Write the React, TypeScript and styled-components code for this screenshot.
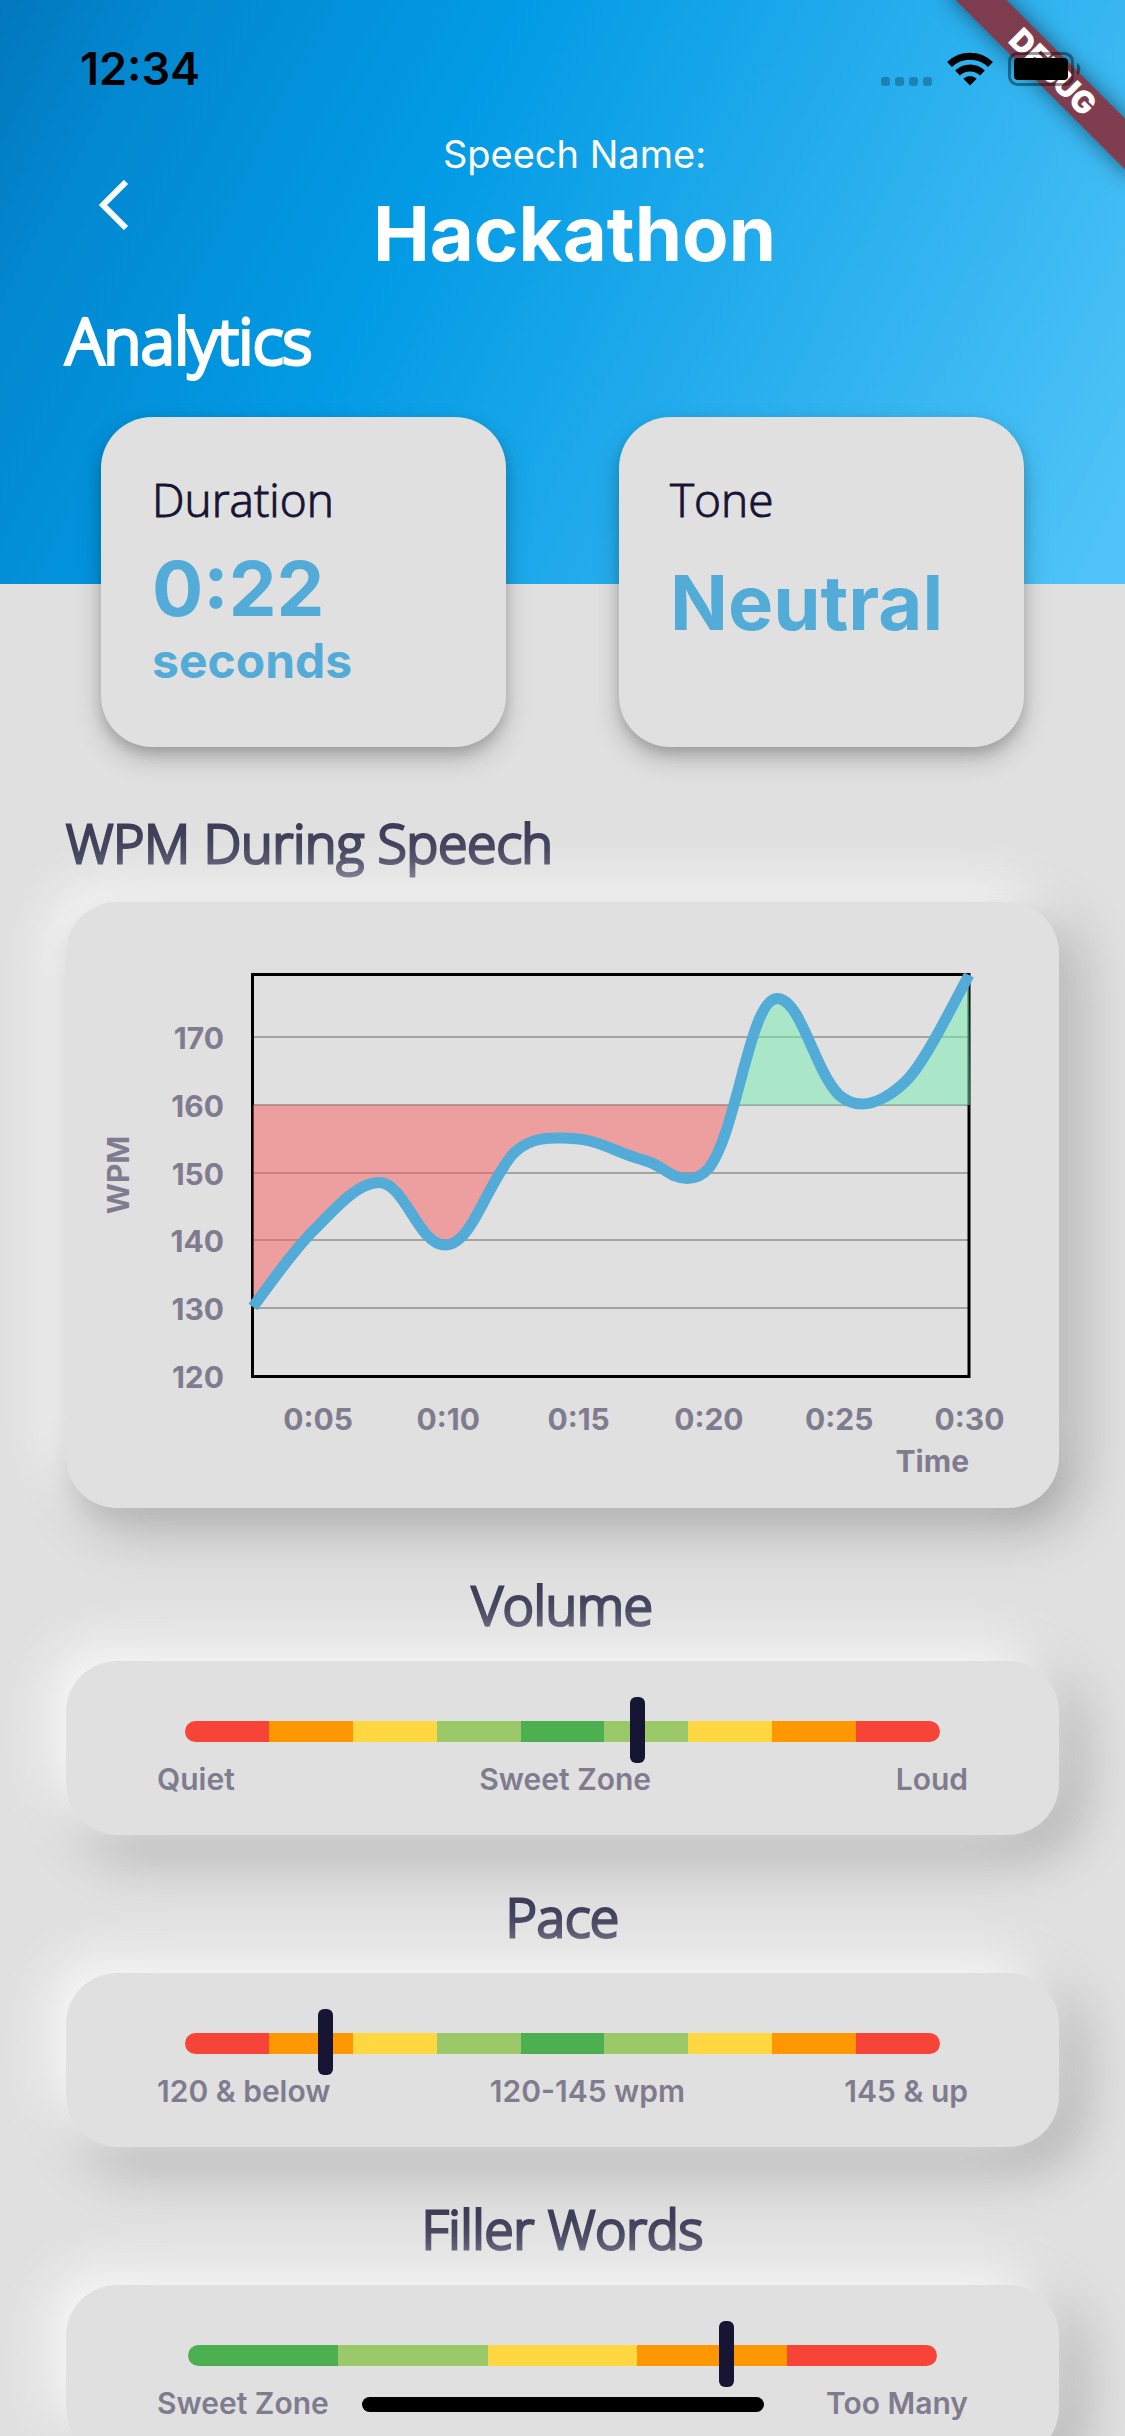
import React from "react";
import styled, { createGlobalStyle } from "styled-components";

const ui = `Inter, "Liberation Sans", sans-serif`;
const display = `"Open Sans", "Liberation Sans", sans-serif`;

const color = {
  surface: "#e0e0e0",
  ink: "#171534",
  title: "#3e3c57",
  muted: "#807c8f",
  accent: "#53abd8",
  red: "#f64438",
  orange: "#ff9800",
  yellow: "#ffd740",
  lime: "#9bc969",
  green: "#4caf50",
};

const GlobalStyle = createGlobalStyle`
  * { box-sizing: border-box; }
  body { margin: 0; background: ${color.surface}; }
  h1, h2, h3, p { margin: 0; }
`;

const Screen = styled.div`
  position: relative;
  height: 100vh;
  overflow: hidden;
  background: ${color.surface};
  font-family: ${ui};
`;

const Scroller = styled.main`
  height: 100%;
  overflow-y: auto;
  scrollbar-width: none;
`;

const StatusBar = styled.div`
  position: absolute;
  inset: 0 0 auto 0;
  display: flex;
  align-items: center;
  justify-content: space-between;
  height: 138px;
  padding: 0 43px 0 80px;
`;

const Clock = styled.time`
  font-size: 45px;
  line-height: 54px;
  font-weight: 600;
  color: #000;
`;

const StatusIcons = styled.div`
  display: flex;
  align-items: flex-end;
  gap: 15px;
`;

const SignalDots = styled.div`
  display: flex;
  gap: 5px;
`;

const SignalDot = styled.span`
  width: 9px;
  height: 9px;
  border-radius: 3px;
  background: rgba(0, 0, 0, 0.25);
`;

const DebugBanner = styled.div`
  position: absolute;
  top: 54px;
  right: -58px;
  width: 260px;
  height: 36px;
  transform: rotate(45deg);
  background: rgba(139, 42, 52, 0.86);
  box-shadow: 0 0 21px rgba(0, 0, 0, 0.5);
  color: #fff;
  font-size: 31px;
  line-height: 36px;
  font-weight: 900;
  text-align: center;
`;

const HomeIndicator = styled.div`
  position: absolute;
  bottom: 24px;
  left: 50%;
  width: 402px;
  height: 15px;
  transform: translateX(-50%);
  border-radius: 8px;
  background: #000;
`;

const Header = styled.header`
  padding: 132px 0 201px;
  background: linear-gradient(117.4deg, #0277bd 0%, #0288d1 12%, #039be5 37%, #4fc3f7 97%);
  color: #fff;
`;

const TitleRow = styled.div`
  display: grid;
  grid-template-columns: 147px 1fr 123px;
  align-items: center;
`;

const BackButton = styled.button`
  justify-self: end;
  display: flex;
  padding: 18px;
  border: 0;
  background: none;
  color: inherit;
`;

const SpeechTitle = styled.div`
  display: flex;
  flex-direction: column;
  align-items: center;
  gap: 12px;
`;

const Caption = styled.p`
  font-size: 38px;
  line-height: 44px;
`;

const SpeechName = styled.h1`
  font-size: 76px;
  line-height: 90px;
  font-weight: 700;
`;

const PageTitle = styled.h2`
  padding: 0 66px;
  margin-top: 19px;
  font-family: ${display};
  font-size: 63px;
  line-height: 86px;
  font-weight: 300;
  -webkit-text-stroke: 4px currentColor;
`;

const Stats = styled.section`
  position: relative;
  display: grid;
  grid-template-columns: 1fr 1fr;
  gap: 113px;
  margin-top: -167px;
  padding: 0 101px;
`;

const StatCard = styled.article`
  padding: 51px 51px 57px;
  border-radius: 51px;
  background: ${color.surface};
  box-shadow: 0 6px 12px rgba(0, 0, 0, 0.14), 0 12px 27px rgba(0, 0, 0, 0.2);
`;

const StatLabel = styled.h3`
  font-family: ${display};
  font-size: 46px;
  line-height: 62px;
  font-weight: 300;
  -webkit-text-stroke: 1px currentColor;
  color: ${color.ink};
`;

const StatValue = styled.p<{ $gap: number }>`
  margin-top: ${(p) => p.$gap}px;
  font-size: 76px;
  line-height: 88px;
  font-weight: 700;
  color: ${color.accent};
`;

const StatUnit = styled.p`
  font-size: 48px;
  line-height: 58px;
  font-weight: 700;
  color: ${color.accent};
`;

const Report = styled.section`
  display: flex;
  flex-direction: column;
  padding: 59px 66px 80px;
`;

const SectionTitle = styled.h2<{ $align?: string; $before?: number; $after?: number }>`
  margin: ${(p) => p.$before ?? 45}px 0 ${(p) => p.$after ?? 19}px;
  font-family: ${display};
  font-size: 53px;
  line-height: 74px;
  font-weight: 300;
  -webkit-text-stroke: 3px currentColor;
  text-align: ${(p) => p.$align ?? "center"};
  color: ${color.title};
`;

const SoftCard = styled.div<{ $lifted?: boolean }>`
  position: relative;
  border-radius: 51px;
  background: ${color.surface};
  box-shadow:
    ${(p) => (p.$lifted ? "0 9px 24px rgba(0, 0, 0, 0.12)," : "")}
    -12px -12px 54px 3px #fff,
    15px 15px 54px 3px rgba(0, 0, 0, 0.28);
`;

const GaugeCard = styled(SoftCard)`
  padding: 60px 91px 38px;
`;

const Track = styled.div<{ $inset: number }>`
  position: relative;
  display: flex;
  height: 21px;
  margin: 0 ${(p) => p.$inset}px;
`;

const Segment = styled.span<{ $color: string }>`
  flex: 1;
  background: ${(p) => p.$color};
  &:first-child { border-radius: 11px 0 0 11px; }
  &:nth-last-child(2) { border-radius: 0 11px 11px 0; }
`;

const Marker = styled.span`
  position: absolute;
  top: -24px;
  bottom: -21px;
  width: 15px;
  margin-left: -8px;
  border-radius: 6px;
  background: ${color.ink};
`;

const Legend = styled.div`
  display: flex;
  justify-content: space-between;
  margin-top: 19px;
  font-size: 30px;
  line-height: 36px;
  font-weight: 600;
  color: ${color.muted};
`;

const ChartSvg = styled.svg`
  display: block;
  width: 100%;
  height: auto;
  font-family: ${ui};
  font-size: 30px;
  font-weight: 700;
  fill: ${color.muted};
`;

const curve =
  "C214 368 234 341 252 324 C274 301 294 280.5 313 280.5 C339 280.5 352 343 379 343 " +
  "C406 343 420 283 447 252 C460 239 474 236 490 236 C534 235 541 248 577 258 " +
  "C596 262 603 276.500 621 276.500 C631 276.500 637 273 643 266 C671 230 684 96.500 711 96.500 " +
  "C735 96.500 748 168 773 193 C780 199 788 202 796 202 C811 202 828 191 840 179 C859 160 884 108 903 73";

const levels = [170, 160, 150, 140, 130, 120];
const times = ["0:05", "0:10", "0:15", "0:20", "0:25", "0:30"];
const levelY = (i: number) => 135 + Math.round(i * 67.8);

function WpmChart() {
  return (
    <ChartSvg viewBox="0 0 993 606" role="img" aria-label="Words per minute over time">
      <defs>
        <clipPath id="above"><rect x="186" y="60" width="719" height="143" /></clipPath>
        <clipPath id="below"><rect x="186" y="203" width="719" height="271" /></clipPath>
      </defs>
      {levels.slice(0, 5).map((l, i) => (
        <line key={l} x1="187" x2="903" y1={levelY(i)} y2={levelY(i)} stroke="#a3a3a3" strokeWidth="2" />
      ))}
      <rect x="186.500" y="72.500" width="716.500" height="402" fill="none" stroke="#000" strokeWidth="3" />
      <path d={`M187 203 L187 405 ${curve} L904 203 Z`} fill="rgba(250,94,94,0.5)" clipPath="url(#below)" />
      <path d={`M187 203 L187 405 ${curve} L904 203 Z`} fill="rgba(114,238,176,0.5)" clipPath="url(#above)" />
      <path d={`M187 405 ${curve}`} fill="none" stroke={color.accent} strokeWidth="11" />
      {levels.map((l, i) => (
        <text key={l} x="158" y={levelY(i) + 12} textAnchor="end">{l}</text>
      ))}
      {times.map((t, i) => (
        <text key={t} x={252 + i * 130.3} y="528" textAnchor="middle">{t}</text>
      ))}
      <text x="903" y="570" textAnchor="end">Time</text>
      <text transform="translate(63 273) rotate(-90)" textAnchor="middle">WPM</text>
    </ChartSvg>
  );
}

const balanced = [
  color.red, color.orange, color.yellow, color.lime, color.green,
  color.lime, color.yellow, color.orange, color.red,
];
const rising = [color.green, color.lime, color.yellow, color.orange, color.red];

const gauges = [
  { title: "Volume", colors: balanced, inset: 28, value: 60, labels: ["Quiet", "Sweet Zone", "Loud"] },
  { title: "Pace", colors: balanced, inset: 28, value: 18.7, labels: ["120 & below", "120-145 wpm", "145 & up"] },
  { title: "Filler Words", colors: rising, inset: 31, value: 72, labels: ["Sweet Zone", "Too Many"] },
];

export default function App() {
  return (
    <Screen>
      <GlobalStyle />
      <Scroller>
        <Header>
          <TitleRow>
            <BackButton aria-label="Back">
              <svg width="30" height="50" viewBox="0 0 30 50" fill="none" stroke="currentColor" strokeWidth="6">
                <path d="M27 2 L4 25 L27 48" />
              </svg>
            </BackButton>
            <SpeechTitle>
              <Caption>Speech Name:</Caption>
              <SpeechName>Hackathon</SpeechName>
            </SpeechTitle>
          </TitleRow>
          <PageTitle>Analytics</PageTitle>
        </Header>
        <Stats>
          <StatCard>
            <StatLabel>Duration</StatLabel>
            <StatValue $gap={14}>0:22</StatValue>
            <StatUnit>seconds</StatUnit>
          </StatCard>
          <StatCard>
            <StatLabel>Tone</StatLabel>
            <StatValue $gap={28}>Neutral</StatValue>
          </StatCard>
        </Stats>
        <Report>
          <SectionTitle $align="left" $before={0} $after={22}>WPM During Speech</SectionTitle>
          <SoftCard $lifted>
            <WpmChart />
          </SoftCard>
          {gauges.map((g, i) => (
            <React.Fragment key={g.title}>
              <SectionTitle $before={i === 0 ? 60 : 45}>{g.title}</SectionTitle>
              <GaugeCard>
                <Track
                  $inset={g.inset}
                  role="meter"
                  aria-label={g.title}
                  aria-valuemin={0}
                  aria-valuemax={100}
                  aria-valuenow={g.value}
                >
                  {g.colors.map((c, n) => (
                    <Segment key={n} $color={c} />
                  ))}
                  <Marker style={{ left: `${g.value}%` }} />
                </Track>
                <Legend>
                  {g.labels.map((l) => (
                    <span key={l}>{l}</span>
                  ))}
                </Legend>
              </GaugeCard>
            </React.Fragment>
          ))}
        </Report>
      </Scroller>
      <DebugBanner>DEBUG</DebugBanner>
      <StatusBar>
        <Clock>12:34</Clock>
        <StatusIcons>
          <SignalDots>
            <SignalDot />
            <SignalDot />
            <SignalDot />
            <SignalDot />
          </SignalDots>
          <svg width="46" height="34" viewBox="0 0 46 34" fill="none" stroke="#000" strokeWidth="7">
            <path d="M2.500 12.500 A29.500 29.500 0 0 1 43.500 12.500" />
            <path d="M10.500 21 A18 18 0 0 1 35.500 21" />
            <path d="M23 33.500 L16.300 26.800 A9.500 9.500 0 0 1 29.700 26.800 Z" fill="#000" stroke="none" />
          </svg>
          <svg width="74" height="34" viewBox="0 0 74 34">
            <rect x="1.500" y="1.500" width="63" height="31" rx="8" fill="none" stroke="#000" strokeOpacity="0.4" strokeWidth="3" />
            <rect x="6" y="6" width="54" height="22" rx="4" fill="#000" />
            <path d="M69 11 A7 7 0 0 1 69 23 Z" fill="#000" fillOpacity="0.45" />
          </svg>
        </StatusIcons>
      </StatusBar>
      <HomeIndicator />
    </Screen>
  );
}
